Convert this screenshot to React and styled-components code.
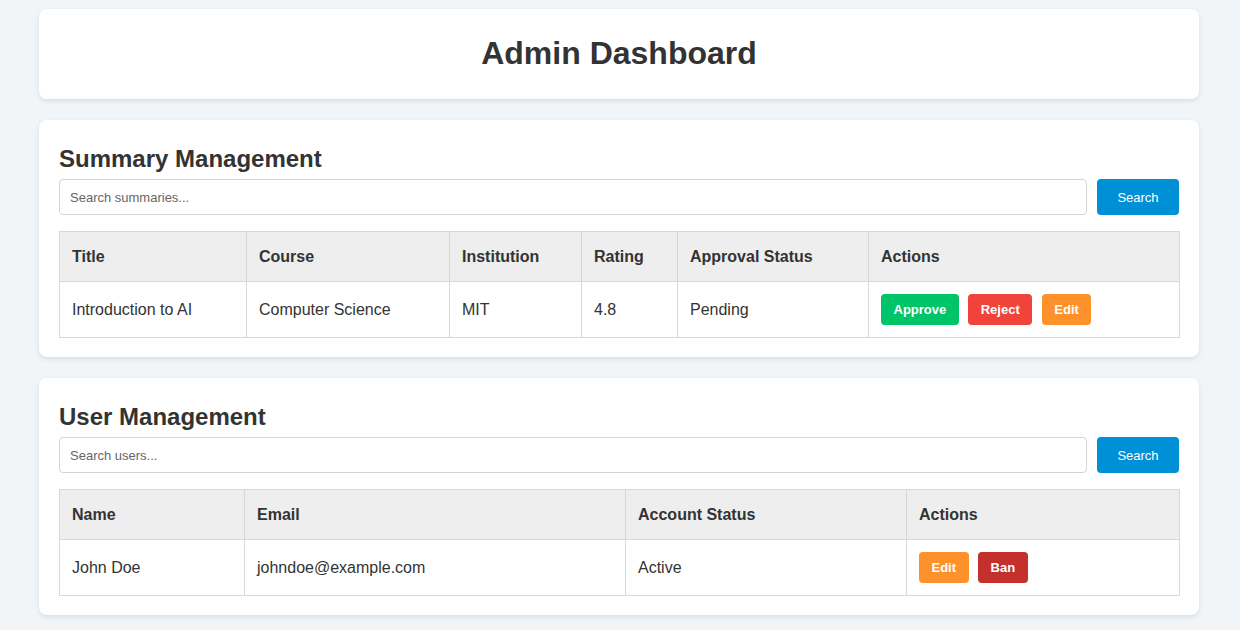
import React from 'react';
import styled, { createGlobalStyle } from 'styled-components';

const GlobalStyle = createGlobalStyle`
    body {
        margin: 0;
        background: #f2f5f8;
        font-family: "Liberation Sans", Arial, sans-serif;
        color: #333;
    }
`

const Page = styled.div`
    padding: 9px 41px 20px 39px;
    display: flex;
    flex-direction: column;
    gap: 21px;
`

const Card = styled.section`
    background: #fff;
    border-radius: 8px;
    box-shadow: 0 2px 5px rgba(0, 0, 0, 0.1);
    padding: ${props => props.$header ? '26px 20px 27px' : '20px 20px 19px'};
`

const Title = styled.h1`
    margin: 0;
    text-align: center;
    font-size: 32px;
    font-weight: bold;
    color: #333;
`

const SectionTitle = styled.h2`
    margin: 5px 0 6px;
    font-size: 24px;
    font-weight: bold;
    color: #333;
`

const SearchRow = styled.div`
    display: flex;
    gap: 10px;
    margin-bottom: 16px;
`

const SearchInput = styled.input`
    flex: 1;
    height: 36px;
    box-sizing: border-box;
    border: 1px solid #d4d4d4;
    border-radius: 4px;
    padding: 0 10px;
    font-family: inherit;
    font-size: 13px;
    color: #333;
    &::placeholder {
        color: #666;
    }
`

const SearchButton = styled.button`
    width: 82px;
    height: 36px;
    border: none;
    border-radius: 4px;
    background: #0090d6;
    color: #fff;
    font-family: inherit;
    font-size: 13px;
`

const Table = styled.table`
    width: 100%;
    border-collapse: collapse;
    table-layout: fixed;
`

const Th = styled.th`
    background: #eee;
    border: 1px solid #d8d8d8;
    padding: 16px 12px 15px;
    line-height: 18px;
    text-align: left;
    font-size: 16px;
    font-weight: bold;
    color: #333;
`

const Td = styled.td`
    border: 1px solid #d8d8d8;
    padding: 12px;
    height: 31px;
    font-size: 16px;
    color: #333;
`

const Actions = styled.div`
    display: flex;
    gap: 9.5px;
`

const colors = {
    approve: '#00c468',
    reject: '#f0433a',
    edit: '#fd922d',
    ban: '#c4302b',
};

const ActionButton = styled.button`
    height: 31px;
    padding: 0 12.5px;
    border: none;
    border-radius: 4px;
    background: ${props => colors[props.$kind]};
    color: #fff;
    font-family: inherit;
    font-size: 13px;
    font-weight: bold;
`

const summaryCols = [187, 203, 132, 96, 191, 311];
const userCols = [185, 381, 281, 273];

function App() {
    return (
        <Page>
            <GlobalStyle />
            <Card $header>
                <Title>Admin Dashboard</Title>
            </Card>

            <Card>
                <SectionTitle>Summary Management</SectionTitle>
                <SearchRow>
                    <SearchInput placeholder="Search summaries..." />
                    <SearchButton>Search</SearchButton>
                </SearchRow>
                <Table>
                    <colgroup>
                        {summaryCols.map((w, i) => <col key={i} style={{ width: w }} />)}
                    </colgroup>
                    <thead>
                        <tr>
                            <Th>Title</Th>
                            <Th>Course</Th>
                            <Th>Institution</Th>
                            <Th>Rating</Th>
                            <Th>Approval Status</Th>
                            <Th>Actions</Th>
                        </tr>
                    </thead>
                    <tbody>
                        <tr>
                            <Td>Introduction to AI</Td>
                            <Td>Computer Science</Td>
                            <Td>MIT</Td>
                            <Td>4.8</Td>
                            <Td>Pending</Td>
                            <Td>
                                <Actions>
                                    <ActionButton $kind="approve">Approve</ActionButton>
                                    <ActionButton $kind="reject">Reject</ActionButton>
                                    <ActionButton $kind="edit">Edit</ActionButton>
                                </Actions>
                            </Td>
                        </tr>
                    </tbody>
                </Table>
            </Card>

            <Card>
                <SectionTitle>User Management</SectionTitle>
                <SearchRow>
                    <SearchInput placeholder="Search users..." />
                    <SearchButton>Search</SearchButton>
                </SearchRow>
                <Table>
                    <colgroup>
                        {userCols.map((w, i) => <col key={i} style={{ width: w }} />)}
                    </colgroup>
                    <thead>
                        <tr>
                            <Th>Name</Th>
                            <Th>Email</Th>
                            <Th>Account Status</Th>
                            <Th>Actions</Th>
                        </tr>
                    </thead>
                    <tbody>
                        <tr>
                            <Td>John Doe</Td>
                            <Td>johndoe@example.com</Td>
                            <Td>Active</Td>
                            <Td>
                                <Actions>
                                    <ActionButton $kind="edit">Edit</ActionButton>
                                    <ActionButton $kind="ban">Ban</ActionButton>
                                </Actions>
                            </Td>
                        </tr>
                    </tbody>
                </Table>
            </Card>
        </Page>
    );
}

export default App;
